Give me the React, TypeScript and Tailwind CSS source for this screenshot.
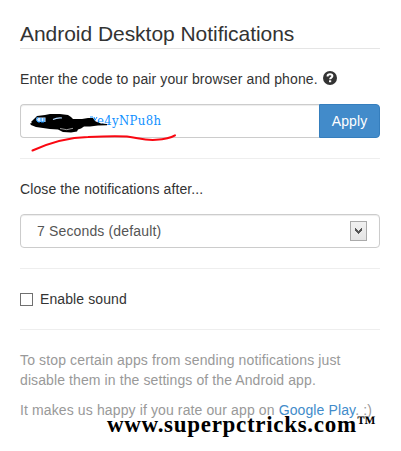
function HelpIcon() {
  return (
    <svg className="mt-[2px] ml-[5px] h-[14px] w-[14px]" viewBox="0 0 14 14" aria-label="Help">
      <circle cx="7" cy="7" r="7" fill="#333" />
      <path d="M4.6 5.5V4.9C4.6 3.6 5.7 3.200 7 3.200s2.400.6 2.400 1.900c0 1.600-2.300 1.500-2.300 3.200" fill="none" stroke="#fff" strokeWidth="2" />
      <path d="M6 9.300h2.200v1.900H6z" fill="#fff" />
    </svg>
  );
}

function PairingCode() {
  return (
    <div className="relative flex h-[34px]">
      <div className="flex flex-1 items-center rounded-l border border-r-0 border-[#ccc] pl-3 shadow-[inset_0_1px_1px_rgba(0,0,0,0.075)]">
        <span className="ml-[64px] font-['DejaVu_Serif_Condensed','DejaVu_Serif',serif] text-[13px] leading-5 tracking-[0.35px] text-[#1090ff] [font-stretch:condensed]">e4yNPu8h</span>
      </div>
      <button className="w-[61px] rounded-r border border-[#357ebd] bg-[#428bca] text-sm tracking-[0.1px] text-white">Apply</button>
      <svg className="pointer-events-none absolute top-0 left-0 h-[50px] w-[165px]" viewBox="20 104 165 50" fill="none">
        <path d="M90 117h3m1 0 1 3m2-3-3 5" stroke="#1090ff" strokeWidth="1" />
        <path d="M32 121l2-2 3-3 8-1 5-1 10 0 8 1 3 2 2 2 9 0 6-1 5 0 2 3 2 1 4 1.500 6 0.500v1.200l-9 0.300-8 1-6 0-3 2-3 1-1 2-6 1-8-0.500-5-2.500-8-0.500-7-1-7-1-5-2-1-1.500 2-0.500-1-1z" fill="#000" />
        <path d="M60 128.500q7 2.500 13-.2" stroke="#ddd" strokeWidth="0.7" />
        <path d="M36.500 117.500h9v4.500h-8q-2-2-1-4.500z" fill="#d5eaff" />
        <path d="M38 117q-3 3 0 5h2M41 118v4h3v-4" stroke="#1090ff" strokeWidth="1" />
        <path d="M53 119.500q4-2 9-1.500" stroke="#b5daff" strokeWidth="1.2" />
        <path d="M32.500 150.500C49 143 68 137.500 88 137c14-.7 29-1.300 39-.4 12 1.400 17 4 29 3.200q13-.8 19-4.500" stroke="#fa0711" strokeWidth="2" strokeLinecap="round" />
      </svg>
    </div>
  );
}

function DurationSelect() {
  return (
    <div className="flex h-[34px] items-center justify-between rounded border border-[#ccc] pr-3 pl-4 text-sm text-[#555] shadow-[inset_0_1px_1px_rgba(0,0,0,0.075)]">
      <span className="tracking-[0.15px]">7 Seconds (default)</span>
      <span className="flex h-5 w-[17px] items-center justify-center border border-[#aaa] bg-linear-to-b from-[#f1f1f1] to-[#e4e4e4]">
        <svg className="h-[6px] w-[7px]" viewBox="0 0 7 6">
          <path d="M0 0h1v1h1v1h1v1h1V2h1V1h1V0h1v3H6v1H5v1H4v1H3V5H2V4H1V3H0z" fill="#555" />
        </svg>
      </span>
    </div>
  );
}

export default function App() {
  return (
    <main className="relative h-[451px] w-[401px] overflow-hidden bg-white px-5 pr-[21px] font-['Liberation_Sans',Arial,sans-serif] text-sm leading-5 text-[#333]">
      <h1 className="h-[49px] border-b border-[#e5e5e5] pt-[22px] text-[21px] leading-[23px] tracking-[-0.04px] whitespace-nowrap">Android Desktop Notifications</h1>
      <div className="mt-5 mb-[15px] flex h-5 tracking-[0.11px] whitespace-nowrap">Enter the code to pair your browser and phone.<HelpIcon /></div>
      <PairingCode />
      <hr className="mt-5 mb-5 border-[#eee]" />
      <p className="mb-[15px] tracking-[0.11px]">Close the notifications after...</p>
      <DurationSelect />
      <hr className="mt-5 mb-5 border-[#eee]" />
      <div className="flex h-5 items-center tracking-[0.1px]">
        <span className="mr-[7px] h-[13px] w-[13px] border border-[#707070] bg-white" role="checkbox" aria-checked="false" />
        Enable sound
      </div>
      <hr className="mt-5 mb-5 border-[#eee]" />
      <p className="whitespace-nowrap text-[#999]"><span className="tracking-[0.135px]">To stop certain apps from sending notifications just</span><br /><span className="tracking-[0.1px]">disable them in the settings of the Android app.</span></p>
      <p className="mt-[10px] tracking-[0.12px] whitespace-nowrap text-[#999]">It makes us happy if you rate our app on <a className="text-[#428bca]">Google Play</a>. :)</p>
      <div className="absolute top-[411px] left-[107px] flex font-['Liberation_Serif',serif] text-[23px] leading-[28px] font-bold tracking-[0.7px] whitespace-nowrap text-black">www.superpctricks.com<span className="text-[19px] leading-[24px] tracking-normal">™</span></div>
    </main>
  );
}
